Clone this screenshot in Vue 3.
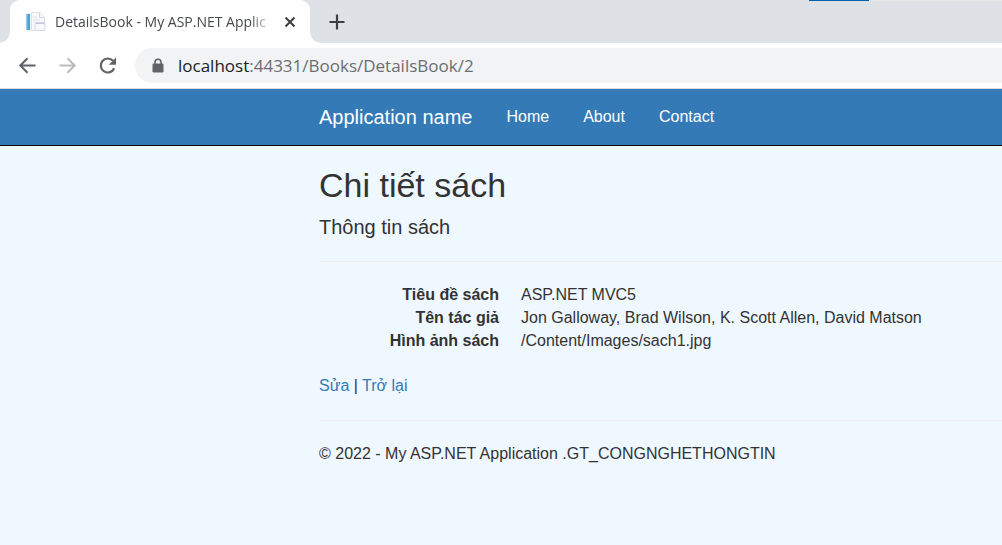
<script setup>
const navLinks = ['Home', 'About', 'Contact']
const details = [
  { term: 'Tiêu đề sách', value: 'ASP.NET MVC5' },
  { term: 'Tên tác giả', value: 'Jon Galloway, Brad Wilson, K. Scott Allen, David Matson' },
  { term: 'Hình ảnh sách', value: '/Content/Images/sach1.jpg' },
]
</script>

<template>
  <div class="window">
    <header class="browser">
      <div class="tab-strip">
        <div class="tab">
          <svg class="favicon" width="20" height="20" viewBox="0 0 20 20" aria-hidden="true">
            <path d="M0 1h12l2 2v16H0z" fill="#f1f4f8" />
            <path d="M5.500 .5h8l5 5v13h-13z" fill="#f8f9fc" stroke="#dde1e9" />
            <path d="M13.500 .5v5h5" fill="none" stroke="#d0d6e0" />
            <path d="M.5 2H4v16H.5z" fill="#4ba0d5" />
            <path d="M.5 2h1v16h-1z" fill="#8cc3e5" />
            <path d="M7 5h4M7 8h7" stroke="#dbe0e9" />
            <path d="M9 10.500h10v8H9z" fill="#f7f8fb" stroke="#d3d7e1" />
            <path d="M10 11.500h8" stroke="#bec7d6" />
          </svg>
          <span class="tab-title">DetailsBook - My ASP.NET Applic</span>
          <button class="icon-button close" aria-label="Close tab">
            <svg width="12" height="12" viewBox="0 0 12 12">
              <path d="M1.5 1.5l9 9M10.5 1.5l-9 9" stroke="#3c4043" stroke-width="2" />
            </svg>
          </button>
        </div>
        <button class="icon-button new-tab" aria-label="New tab">
          <svg width="16" height="16" viewBox="0 0 16 16">
            <path d="M8 .5v15M.5 8h15" stroke="#3c4043" stroke-width="2.2" />
          </svg>
        </button>
        <div class="screen-edge"></div>
      </div>
      <div class="toolbar">
        <button class="icon-button" aria-label="Back">
          <svg width="20" height="20" viewBox="0 0 20 20">
            <path d="M17.500 9.500H3M9.500 2.300L2.300 9.500l7.200 7.200" fill="none" stroke="#5f6368" stroke-width="2" />
          </svg>
        </button>
        <button class="icon-button" aria-label="Forward">
          <svg width="20" height="20" viewBox="0 0 20 20">
            <path d="M1.500 9.500H16M9.500 2.300l7.200 7.200-7.200 7.200" fill="none" stroke="#babcbe" stroke-width="2" />
          </svg>
        </button>
        <button class="icon-button" aria-label="Reload">
          <svg width="20" height="20" viewBox="0 0 20 20">
            <path d="M16.200 12.300A7 7 0 1 1 15 4.800" fill="none" stroke="#5f6368" stroke-width="2.200" />
            <path d="M18 1.500v7.200h-7.200z" fill="#5f6368" />
          </svg>
        </button>
        <div class="address">
          <svg class="lock" width="12" height="16" viewBox="0 0 12 16" aria-hidden="true">
            <path d="M3 6V4.300a3 3 0 0 1 6 0V6" fill="none" stroke="#5f6368" stroke-width="1.600" />
            <rect x="0.500" y="5.500" width="11" height="9" rx="1.300" fill="#5f6368" />
          </svg>
          <span class="url"><span class="host">localhost</span>:44331/Books/DetailsBook/2</span>
        </div>
      </div>
    </header>

    <nav class="navbar">
      <a class="brand" href="#">Application name</a>
      <a v-for="link in navLinks" :key="link" class="nav-link" href="#">{{ link }}</a>
    </nav>

    <main class="content">
      <h2>Chi tiết sách</h2>
      <h4>Thông tin sách</h4>
      <hr />
      <dl>
        <template v-for="item in details" :key="item.term">
          <dt>{{ item.term }}</dt>
          <dd>{{ item.value }}</dd>
        </template>
      </dl>
      <p class="actions"><a href="#">Sửa</a> | <a href="#">Trở lại</a></p>
      <hr />
      <footer>© 2022 - My ASP.NET Application .GT_CONGNGHETHONGTIN</footer>
    </main>
  </div>
</template>

<style>
body {
  background: #eff7ff;
}
</style>

<style scoped>
.window {
  min-height: 100vh;
  overflow: hidden;
  font-family: "Liberation Sans", Arial, sans-serif;
  font-size: 16px;
  color: #333;
}

.browser {
  background: #fff;
  border-bottom: 1px solid #dadce0;
  font-family: "Open Sans", "Noto Sans", sans-serif;
}

.tab-strip {
  position: relative;
  display: flex;
  align-items: center;
  height: 43px;
  padding-left: 10px;
  background: #dee1e6;
}

.tab {
  position: relative;
  display: flex;
  align-items: center;
  box-sizing: border-box;
  width: 300px;
  height: 43px;
  padding: 0 14px 0 16px;
  border-radius: 10px 10px 0 0;
  background: #fff;
}

.tab::before,
.tab::after {
  content: "";
  position: absolute;
  bottom: 0;
  width: 10px;
  height: 10px;
}

.tab::before {
  right: 100%;
  background: radial-gradient(circle at 0 0, #dee1e6 9px, #fff 10px);
}

.tab::after {
  left: 100%;
  background: radial-gradient(circle at 100% 0, #dee1e6 9px, #fff 10px);
}

.favicon {
  flex: none;
}

.tab-title {
  flex: 1;
  margin-left: 9px;
  white-space: nowrap;
  font-size: 14px;
  line-height: 20px;
  color: #45484c;
  mask-image: linear-gradient(to right, #000 calc(100% - 24px), transparent);
}

.icon-button {
  display: flex;
  flex: none;
  padding: 0;
  border: 0;
  background: none;
}

.close {
  margin-left: 10px;
}

.new-tab {
  margin-left: 19px;
}

.screen-edge {
  position: absolute;
  top: 0;
  left: 809px;
  right: 0;
  height: 1px;
  background: linear-gradient(to right, #0063b1 60px, #e6e6e6 60px);
}

.toolbar {
  display: flex;
  align-items: center;
  gap: 20px;
  padding: 5px 0 5px 18px;
}

.address {
  display: flex;
  flex: 1;
  align-items: center;
  gap: 14px;
  height: 35px;
  margin-left: -3px;
  padding-left: 17px;
  border-radius: 18px 0 0 18px;
  background: #f1f3f4;
}

.url {
  font-size: 17px;
  line-height: 24px;
  color: #6b6e72;
}

.host {
  color: #202124;
}

.navbar {
  display: flex;
  align-items: center;
  gap: 34px;
  height: 56px;
  padding-left: 319px;
  border-bottom: 1px solid #080808;
  background: #337ab7;
}

.navbar a {
  color: #fff;
  text-decoration: none;
}

.brand {
  font-size: 20px;
}

.content {
  padding: 20px 0 0 319px;
}

h2,
h4 {
  margin: 0;
  font-weight: 400;
}

h2 {
  font-size: 34px;
  line-height: 38px;
}

h4 {
  margin-top: 12px;
  font-size: 20px;
  line-height: 22px;
}

hr {
  height: 0;
  margin: 23px 0 22px;
  border: 0;
  border-top: 1px solid #eee;
}

dl {
  display: grid;
  grid-template-columns: 180px 1fr;
  gap: 1px 22px;
  margin: 0 0 23px;
  line-height: 22px;
}

dt {
  font-weight: 700;
  text-align: right;
}

dd {
  margin: 0;
}

.actions {
  margin: 0;
  line-height: 22px;
}

.actions a {
  color: #337ab7;
  text-decoration: none;
}

footer {
  line-height: 22px;
}
</style>
